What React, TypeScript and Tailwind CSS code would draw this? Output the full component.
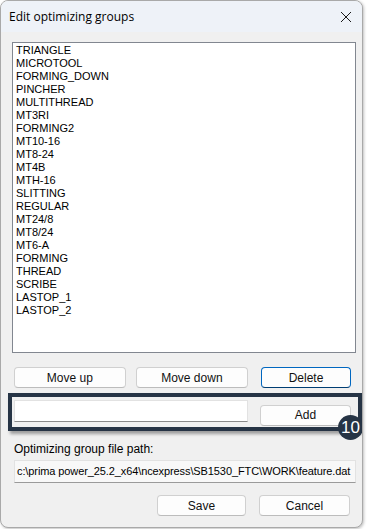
import React from 'react';

const groups = [
  'TRIANGLE', 'MICROTOOL', 'FORMING_DOWN', 'PINCHER', 'MULTITHREAD', 'MT3RI', 'FORMING2',
  'MT10-16', 'MT8-24', 'MT4B', 'MTH-16', 'SLITTING', 'REGULAR', 'MT24/8', 'MT8/24', 'MT6-A',
  'FORMING', 'THREAD', 'SCRIBE', 'LASTOP_1', 'LASTOP_2',
];

const uiFont = { fontFamily: '"Liberation Sans", Arial, sans-serif' };

// Win11 style push button
const Btn = ({ label, w, focused }: { label: string; w: string; focused?: boolean }) => (
  <button
    className={`${w} h-[21px] rounded-[4px] bg-[#fdfdfd] text-[12px] font-normal text-[#111] leading-none ${
      focused ? 'border border-[#0067c0] border-b-[#003e73]' : 'border border-[#d0d0d0] border-b-[#bcbcbc]'
    }`}
  >
    {label}
  </button>
);

export default function App() {
  return (
    <div className="w-[367px] h-[529px] bg-white" style={uiFont}>
      <div className="relative w-[363px] h-[528px] rounded-[8px] border border-[#a9a9a9] bg-[#f0f0f0] overflow-hidden shadow-[1px_1px_3px_rgba(0,0,0,0.25)] flex flex-col">
        {/* Title bar */}
        <div className="h-[31px] shrink-0 bg-[#eef2f8] flex items-center justify-between pl-[8px] pr-[8px]">
          <span className="text-[12px] text-black" style={{ fontFamily: '"Open Sans", "Noto Sans", sans-serif' }}>
            Edit optimizing groups
          </span>
          <svg width="12" height="12" viewBox="0 0 12 12" className="mr-[2px]">
            <path d="M1 1L11 11M11 1L1 11" stroke="#1a1a1a" strokeWidth="1" />
          </svg>
        </div>

        <div className="flex flex-col px-[11px] pt-[10px]">
          {/* List box */}
          <div className="h-[311px] w-[344px] bg-white border border-[#828790] pl-[3px] pt-[1px]">
            {groups.map((g) => (
              <div key={g} className="h-[13px] leading-[13px] text-[11px] text-black">
                {g}
              </div>
            ))}
          </div>

          {/* Move / delete row */}
          <div className="flex items-center mt-[14px] pl-[2px]">
            <Btn label="Move up" w="w-[113px]" />
            <div className="w-[10px]" />
            <Btn label="Move down" w="w-[114px]" />
            <div className="w-[13px]" />
            <Btn label="Delete" w="w-[91px]" focused />
          </div>

          {/* Add row with callout */}
          <div className="relative flex items-start mt-[12px] pl-[2px] h-[22px]">
            <div className="w-[238px] h-[22px] bg-white border border-[#e2e2e2] border-b-[#8a8a8a]" />
            <div className="w-[12px]" />
            <div className="mt-[2px]">
              <Btn label="Add" w="w-[91px]" />
            </div>
            <div className="absolute left-[-4px] top-[-7px] w-[354px] h-[38px] border-[4px] border-[#263445] shadow-[2px_3px_3px_rgba(0,0,0,0.35)]" />
            <div className="absolute left-[326px] top-[15px] w-[25px] h-[25px] rounded-full bg-[#263445] flex items-center justify-center text-white text-[17px] leading-none">
              10
            </div>
          </div>

          {/* File path */}
          <div className="mt-[20px] pl-[2px] text-[12px] text-black leading-[14px]">Optimizing group file path:</div>
          <div className="mt-[4px] ml-[2px] h-[23px] w-[342px] bg-[#f8f8f8] border border-[#e2e2e2] border-b-[#9a9a9a] flex items-center pl-[2px] text-[11px] tracking-[-0.1px] text-black whitespace-nowrap overflow-hidden">
            c:\prima power_25.2_x64\ncexpress\SB1530_FTC\WORK\feature.dat
          </div>

          {/* Save / cancel */}
          <div className="flex justify-end items-center mt-[12px] pr-[1px]">
            <Btn label="Save" w="w-[89px]" />
            <div className="w-[13px]" />
            <Btn label="Cancel" w="w-[91px]" />
          </div>
        </div>
      </div>
    </div>
  );
}
